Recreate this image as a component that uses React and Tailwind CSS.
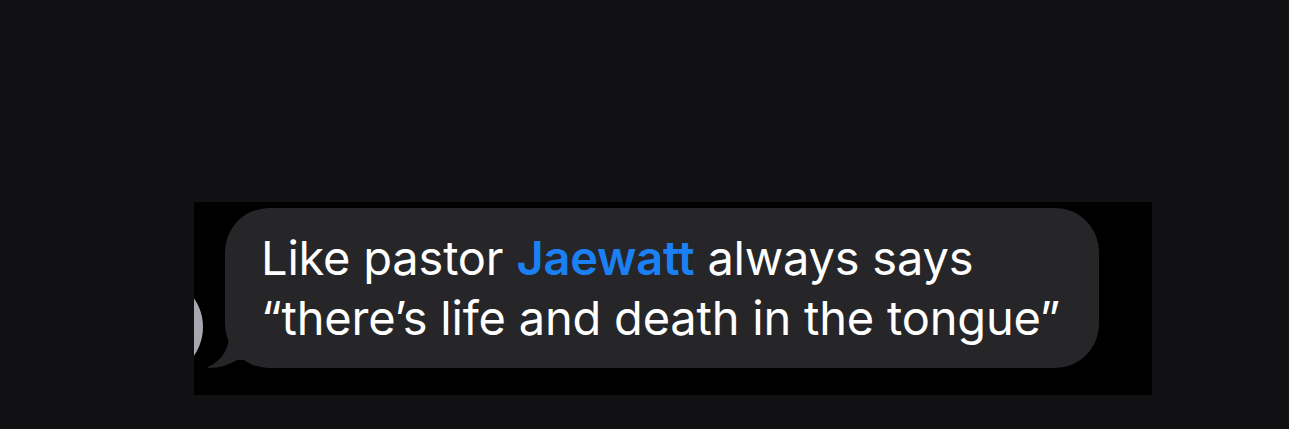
import React from "react";

// iMessage-style bubble tail, bottom-left
const Tail = () => (
  <svg
    className="absolute left-[-18px] bottom-0"
    width="40"
    height="34"
    viewBox="0 0 40 34"
  >
    <path
      d="M22 0 C22 14 16 26 1 33 C1 33 0 34 2 34 C12 34 22 31 30 26 L40 26 L40 0 Z"
      fill="#262629"
    />
  </svg>
);

export default function App() {
  return (
    <div className="w-[1289px] h-[429px] bg-[#111113] pt-[202px] pl-[194px] overflow-hidden">
      <div className="relative w-[958px] h-[193px] bg-black pt-[6px] pl-[31px] overflow-hidden">
        {/* avatar peeking from the left */}
        <div className="absolute left-[-91px] top-[75px] w-[100px] h-[100px] rounded-full bg-[#a7a7af]" />

        <div className="relative w-[874px] h-[160px]">
          <Tail />
          <div className="relative h-full rounded-[44px] bg-[#262629] pl-[36px] pt-[20px] font-['Inter',sans-serif] text-[47px] leading-[60px] tracking-[-0.2px] text-white">
            <div>
              Like pastor <span className="font-semibold text-[#1b80f3]">Jaewatt</span> always says
            </div>
            <div>“there’s life and death in the tongue”</div>
          </div>
        </div>
      </div>
    </div>
  );
}
